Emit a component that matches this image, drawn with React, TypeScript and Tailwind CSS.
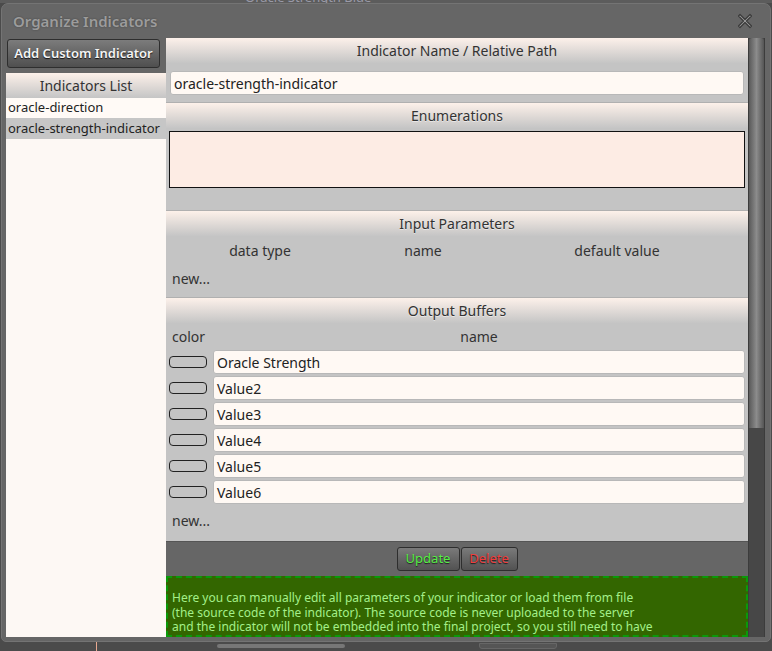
import React from "react";

const font = { fontFamily: '"Noto Sans", "Open Sans", sans-serif' };

function SectionHeader({ title }: { title: string }) {
  return (
    <div className="h-[26px] shrink-0 flex items-center justify-center bg-gradient-to-b from-[#fdf1ea] to-[#c5c5c5] text-[14px] text-[#333] [text-shadow:0_1px_0_rgba(255,255,255,0.5)] border-t border-[#b0b0b0]">
      {title}
    </div>
  );
}

function TextInput({ value, className = "" }: { value: string; className?: string }) {
  return (
    <div
      className={`h-[24px] bg-[#fff9f4] border border-[#b8b8b8] rounded-[3px] flex items-center px-[3px] text-[14px] text-[#222] ${className}`}
    >
      {value}
    </div>
  );
}

function BufferRow({ name }: { name: string }) {
  return (
    <div className="flex items-center h-[24px] shrink-0">
      <div className="w-[38px] h-[12px] rounded-[4px] border border-[#222] mr-[6px] shrink-0" />
      <TextInput value={name} className="flex-1" />
    </div>
  );
}

function CloseIcon() {
  return (
    <svg width="16" height="16" viewBox="0 0 16 16">
      <path
        d="M3 1.5 L8 6.5 L13 1.5 L14.5 3 L9.5 8 L14.5 13 L13 14.5 L8 9.5 L3 14.5 L1.5 13 L6.5 8 L1.5 3 Z"
        fill="#a0a0a0"
        stroke="#3a3a3a"
        strokeWidth="1.2"
        strokeLinejoin="round"
      />
    </svg>
  );
}

export default function App() {
  const buffers = ["Oracle Strength", "Value2", "Value3", "Value4", "Value5", "Value6"];
  return (
    <div className="w-[772px] h-[651px] bg-[#4b4b4b] overflow-hidden flex flex-col" style={font}>
      {/* strip of the page behind the dialog */}
      <div className="h-[3px] shrink-0 bg-[#5c5c5c] overflow-hidden flex">
        <div className="ml-[245px] -mt-[9px] text-[13px] text-[#9a9aa8] leading-none">Oracle Strength Blue</div>
      </div>

      {/* dialog */}
      <div className="ml-[1px] w-[770px] h-[639px] shrink-0 bg-[#666] border border-[#747474] rounded-t-[7px] rounded-b-[5px] flex flex-col overflow-hidden">
        <div className="h-[34px] shrink-0 flex items-center justify-between pl-[11px] pr-[17px]">
          <div className="text-[15px] font-semibold text-[#9c9c9c] [text-shadow:0_0_2px_rgba(0,0,0,0.35)]">
            Organize Indicators
          </div>
          <CloseIcon />
        </div>

        <div className="flex flex-1 min-h-0 pl-[4px] pr-[4px] pb-[4px]">
          {/* left column */}
          <div className="w-[160px] shrink-0 flex flex-col">
            <button className="mt-[1px] ml-[1px] w-[153px] h-[29px] shrink-0 rounded-[3px] border border-[#2e2e2e] bg-gradient-to-b from-[#7c7c7c] to-[#4f4f4f] text-[13px] font-semibold text-[#f4f4f4] [text-shadow:0_1px_1px_rgba(0,0,0,0.8)]">
              Add Custom Indicator
            </button>
            <div className="mt-[5px] flex-1 bg-[#fdf8f4] flex flex-col">
              <div className="h-[25px] shrink-0 flex items-center justify-center bg-gradient-to-b from-[#fdf1ea] to-[#c5c5c5] text-[14px] text-[#333]">
                Indicators List
              </div>
              <div className="h-[20px] shrink-0 flex items-center px-[2px] text-[13px] text-[#222] bg-[#fffaf6]">
                oracle-direction
              </div>
              <div className="h-[21px] shrink-0 flex items-center px-[2px] text-[13px] text-[#222] bg-[#c6c6c6]">
                oracle-strength-indicator
              </div>
            </div>
          </div>

          {/* right panel */}
          <div className="w-[582px] shrink-0 flex flex-col overflow-hidden bg-[#c4c4c4]">
            <div className="h-[25px] flex items-center justify-center bg-gradient-to-b from-[#fdf1ea] to-[#c5c5c5] text-[14px] text-[#333] shrink-0">
              Indicator Name / Relative Path
            </div>
            <div className="h-[39px] shrink-0 pt-[8px] px-[4px]">
              <TextInput value="oracle-strength-indicator" />
            </div>

            <SectionHeader title="Enumerations" />
            <div className="h-[82px] shrink-0 pt-[3px] px-[3px]">
              <div className="h-[57px] bg-[#fdece4] border border-[#111]" />
            </div>

            <SectionHeader title="Input Parameters" />
            <div className="h-[61px] shrink-0 flex flex-col">
              <div className="h-[28px] shrink-0 grid grid-cols-[188px_138px_250px] items-center text-[14px] text-[#333]">
                <div className="text-center">data type</div>
                <div className="text-center">name</div>
                <div className="text-center">default value</div>
              </div>
              <div className="h-[28px] shrink-0 flex items-center px-[6px] text-[14px] text-[#333]">new...</div>
            </div>

            <SectionHeader title="Output Buffers" />
            <div className="h-[218px] shrink-0 flex flex-col px-[3px]">
              <div className="h-[27px] shrink-0 flex items-center text-[14px] text-[#333]">
                <div className="w-[44px] pl-[3px]">color</div>
                <div className="flex-1 text-center">name</div>
              </div>
              <div className="flex flex-col gap-[2px] shrink-0">
                {buffers.map((b) => (
                  <BufferRow key={b} name={b} />
                ))}
              </div>
              <div className="h-[33px] shrink-0 flex items-center px-[3px] text-[14px] text-[#333]">new...</div>
            </div>

            <div className="h-[35px] shrink-0 bg-[#666] border-t border-[#555] flex items-center justify-center gap-[1px]">
              <button className="h-[24px] w-[63px] rounded-[3px] border border-[#2e2e2e] bg-gradient-to-b from-[#7a7a7a] to-[#525252] text-[13px] text-[#57ee45] [text-shadow:0_1px_1px_rgba(0,0,0,0.7)]">
                Update
              </button>
              <button className="h-[24px] w-[57px] rounded-[3px] border border-[#2e2e2e] bg-gradient-to-b from-[#7a7a7a] to-[#525252] text-[13px] text-[#f03c3c] [text-shadow:0_1px_1px_rgba(0,0,0,0.7)]">
                Delete
              </button>
            </div>

            <div className="flex-1 min-h-0 overflow-hidden bg-[#336600] border-2 border-dashed border-[#0a9a0a] px-[4px] pt-[13px]">
              <p className="w-[486px] text-[12px] leading-[14.5px] text-[#a4f08a]">
                Here you can manually edit all parameters of your indicator or load them from file (the source code of
                the indicator). The source code is never uploaded to the server and the indicator will not be embedded
                into the final project, so you still need to have it in your "\indicators" folder.
              </p>
            </div>
          </div>

          {/* scrollbar */}
          <div className="w-[17px] shrink-0 bg-[#474747] border-x border-[#3c3c3c] flex flex-col">
            <div className="h-[390px] rounded-t-[3px] bg-gradient-to-r from-[#5a5a5a] via-[#8c8c8c] to-[#555]" />
          </div>
        </div>
      </div>

      {/* strip of the page below the dialog */}
      <div className="flex-1 flex items-start">
        <div className="ml-[96px] w-[1px] h-[10px] bg-[#e8a890]" />
        <div className="ml-[120px] mt-[2px] w-[128px] h-[4px] rounded-[2px] bg-[#777]" />
        <div className="ml-[134px] mt-[1px] w-[78px] h-[6px] rounded-b-[3px] border border-[#666] bg-[#555]" />
      </div>
    </div>
  );
}
